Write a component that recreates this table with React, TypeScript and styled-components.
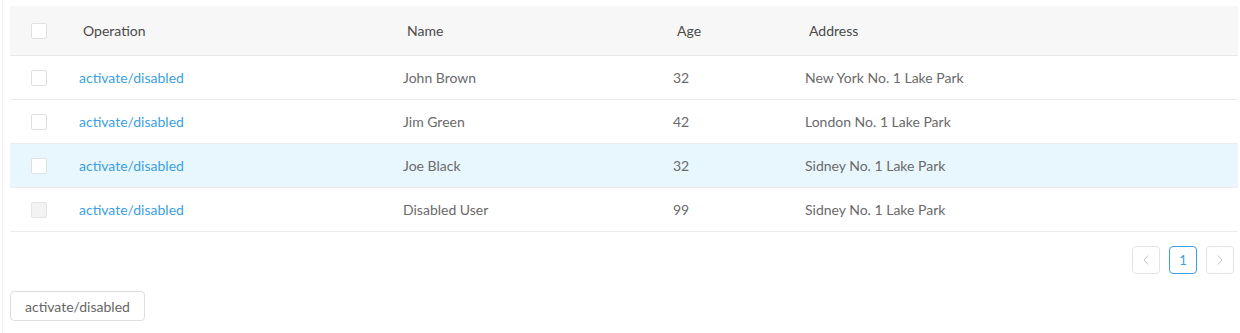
import React from 'react';
import styled, {createGlobalStyle} from 'styled-components';

type Row = {
  key: string;
  name: string;
  age: number;
  address: string;
  disabled?: boolean;
  hover?: boolean;
};

const rows: Row[] = [
  {key: '1', name: 'John Brown', age: 32, address: 'New York No. 1 Lake Park'},
  {key: '2', name: 'Jim Green', age: 42, address: 'London No. 1 Lake Park'},
  {key: '3', name: 'Joe Black', age: 32, address: 'Sidney No. 1 Lake Park', hover: true},
  {key: '4', name: 'Disabled User', age: 99, address: 'Sidney No. 1 Lake Park', disabled: true},
];

const GlobalStyle = createGlobalStyle`
  body {
    margin: 0;
    background: #fff;
    font-family: Lato, "Open Sans", sans-serif;
    font-size: 14px;
    color: #6a6a6a;
  }
`;

const Page = styled.div`
  margin-left: 2px;
  border-left: 1px solid #f2f2f2;
  padding: 6px 2px 12px 7px;
  min-height: 315px;
`;

const Table = styled.div`
  display: grid;
  grid-template-columns: 53px 324px 270px 132px 1fr;
`;

const HeadCell = styled.div`
  height: 49px;
  display: flex;
  align-items: center;
  padding-left: 20px;
  background: #f7f7f7;
  border-bottom: 1px solid #e9e9e9;
  color: #4a4a4a;
  &:first-child {
    padding-left: 21px;
  }
`;

const Cell = styled.div<{$hover?: boolean}>`
  height: 43px;
  display: flex;
  align-items: center;
  padding-left: 16px;
  border-bottom: 1px solid #ececec;
  background: ${p => (p.$hover ? '#e8f7fd' : '#fff')};
  &:nth-child(5n + 1) {
    padding-left: 21px;
  }
`;

const Check = styled.span<{$disabled?: boolean}>`
  width: 16px;
  height: 16px;
  box-sizing: border-box;
  border: 1px solid ${p => (p.$disabled ? '#e3e3e3' : '#e0e0e0')};
  border-radius: 2px;
  background: ${p => (p.$disabled ? '#f3f3f3' : '#fff')};
`;

const Link = styled.a`
  color: #3c9fe0;
  text-decoration: none;
  cursor: pointer;
`;

const Pager = styled.div`
  display: flex;
  justify-content: flex-end;
  gap: 9px;
  margin-top: 14px;
  padding-right: 4px;
`;

const PageItem = styled.span<{$active?: boolean}>`
  width: 28px;
  height: 28px;
  box-sizing: border-box;
  display: flex;
  align-items: center;
  justify-content: center;
  border: 1px solid ${p => (p.$active ? '#3c9fe0' : '#e4e4e4')};
  border-radius: 4px;
  color: ${p => (p.$active ? '#3c9fe0' : '#ccc')};
  font-size: 13px;
`;

const Button = styled.button`
  margin-top: 17px;
  height: 30px;
  padding: 0 14px;
  border: 1px solid #dedede;
  border-radius: 4px;
  background: #fff;
  color: #666;
  font-family: inherit;
  font-size: 14px;
  display: block;
`;

function Arrow({dir}: {dir: 'left' | 'right'}) {
  return (
    <svg width="8" height="12" viewBox="0 0 8 12" fill="none">
      <path
        d={dir === 'left' ? 'M6 1.5 L2 6 L6 10.5' : 'M2 1.5 L6 6 L2 10.5'}
        stroke="#c4c4c4"
        strokeWidth="1"
      />
    </svg>
  );
}

export default function App() {
  return (
    <Page>
      <GlobalStyle />
      <Table>
        <HeadCell>
          <Check />
        </HeadCell>
        <HeadCell>Operation</HeadCell>
        <HeadCell>Name</HeadCell>
        <HeadCell>Age</HeadCell>
        <HeadCell>Address</HeadCell>
        {rows.map(r => (
          <React.Fragment key={r.key}>
            <Cell $hover={r.hover}>
              <Check $disabled={r.disabled} />
            </Cell>
            <Cell $hover={r.hover}>
              <Link>activate/disabled</Link>
            </Cell>
            <Cell $hover={r.hover}>{r.name}</Cell>
            <Cell $hover={r.hover}>{r.age}</Cell>
            <Cell $hover={r.hover}>{r.address}</Cell>
          </React.Fragment>
        ))}
      </Table>
      <Pager>
        <PageItem>
          <Arrow dir="left" />
        </PageItem>
        <PageItem $active>1</PageItem>
        <PageItem>
          <Arrow dir="right" />
        </PageItem>
      </Pager>
      <Button>activate/disabled</Button>
    </Page>
  );
}
